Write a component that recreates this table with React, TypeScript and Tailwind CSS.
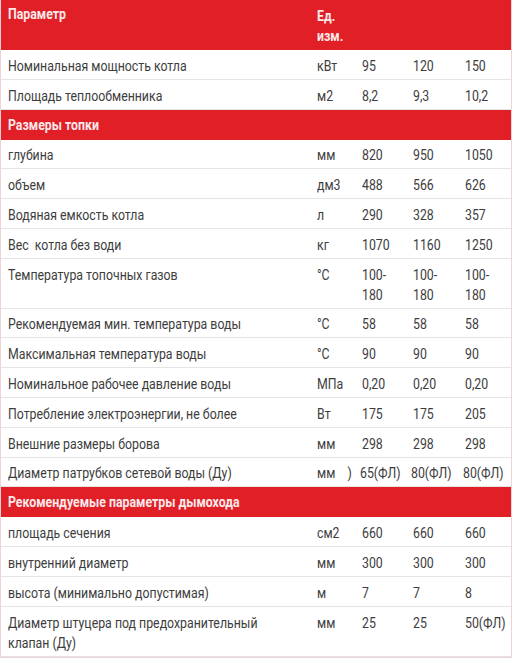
import React from "react";

type Row =
  | { kind: "section"; title: string }
  | { kind: "data"; param: string; unit: string; v: [string, string, string]; extra?: boolean };

const rows: Row[] = [
  { kind: "data", param: "Номинальная мощность котла", unit: "кВт", v: ["95", "120", "150"] },
  { kind: "data", param: "Площадь теплообменника", unit: "м2", v: ["8,2", "9,3", "10,2"] },
  { kind: "section", title: "Размеры топки" },
  { kind: "data", param: "глубина", unit: "мм", v: ["820", "950", "1050"] },
  { kind: "data", param: "объем", unit: "дм3", v: ["488", "566", "626"] },
  { kind: "data", param: "Водяная емкость котла", unit: "л", v: ["290", "328", "357"] },
  { kind: "data", param: "Вес\u00a0 котла без води", unit: "кг", v: ["1070", "1160", "1250"] },
  { kind: "data", param: "Температура топочных газов", unit: "°С", v: ["100-\n180", "100-\n180", "100-\n180"] },
  { kind: "data", param: "Рекомендуемая мин. температура воды", unit: "°С", v: ["58", "58", "58"] },
  { kind: "data", param: "Максимальная температура воды", unit: "°С", v: ["90", "90", "90"] },
  { kind: "data", param: "Номинальное рабочее давление воды", unit: "МПа", v: ["0,20", "0,20", "0,20"] },
  { kind: "data", param: "Потребление электроэнергии, не более", unit: "Вт", v: ["175", "175", "205"] },
  { kind: "data", param: "Внешние размеры борова", unit: "мм", v: ["298", "298", "298"] },
  { kind: "data", param: "Диаметр патрубков сетевой воды (Ду)", unit: "мм", v: ["65(ФЛ)", "80(ФЛ)", "80(ФЛ)"], extra: true },
  { kind: "section", title: "Рекомендуемые параметры дымохода" },
  { kind: "data", param: "площадь сечения", unit: "см2", v: ["660", "660", "660"] },
  { kind: "data", param: "внутренний диаметр", unit: "мм", v: ["300", "300", "300"] },
  { kind: "data", param: "высота (минимально допустимая)", unit: "м", v: ["7", "7", "8"] },
  { kind: "data", param: "Диаметр штуцера под предохранительный клапан (Ду)", unit: "мм", v: ["25", "25", "50(ФЛ)"] },
];

const grid = "grid grid-cols-[309px_45px_51px_52px_54px]";

function T({ children }: { children: React.ReactNode }) {
  return <span className="block w-[114%] origin-left scale-x-[0.88] whitespace-pre-line">{children}</span>;
}

export default function App() {
  return (
    <div className="w-[513px] h-[663px] bg-white" style={{ fontFamily: "Roboto, 'Noto Sans', sans-serif" }}>
      <div className="w-[512px] border-x border-b border-[#efd2d4]">
        <div className={`${grid} bg-[#e01f27] text-[#fbe9ea] font-bold text-[14px] leading-[20px] h-[50px]`}>
          <div className="pl-[7px] pt-[4px]">
            <T>Параметр</T>
          </div>
          <div className="pl-[7px] pt-[6px]">
            <T>{"Ед.\nизм."}</T>
          </div>
          <div />
          <div />
          <div />
        </div>
        {rows.map((r, i) =>
          r.kind === "section" ? (
            <div
              key={i}
              className="bg-[#e01f27] text-[#fbe9ea] font-bold text-[14px] leading-[20px] h-[30px] pl-[7px] pt-[5px]"
            >
              <T>{r.title}</T>
            </div>
          ) : (
            <div
              key={i}
              className={`${grid} text-[#3d3d3d] text-[14px] leading-[20px] pt-[5.8px] pb-[3px] border-b border-[#e4e4e4]`}
            >
              <div className="pl-[7px] pr-[40px]">
                <T>{r.param}</T>
              </div>
              <div className="pl-[7px] flex">
                <T>
                  {r.unit}
                  {r.extra && <span className="ml-[14px]">)</span>}
                </T>
              </div>
              {r.v.map((x, j) => (
                <div key={j} className={r.extra ? "pl-[5px]" : "pl-[7px]"}>
                  <T>{x}</T>
                </div>
              ))}
            </div>
          )
        )}
      </div>
    </div>
  );
}
